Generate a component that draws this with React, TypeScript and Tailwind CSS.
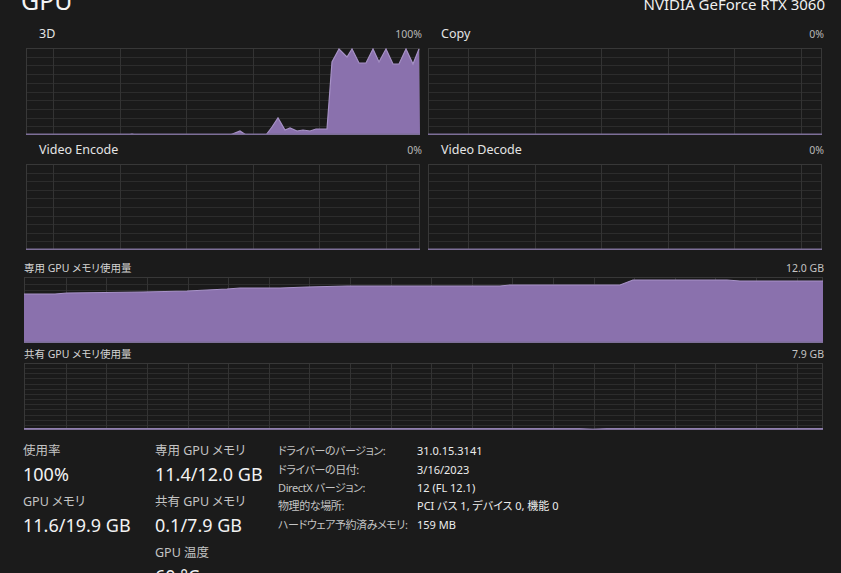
import React from "react";

type Pt = [number, number];

interface GraphProps {
  w: number;
  h: number;
  rows: number;
  colStep: number;
  colStart: number;
  points?: Pt[];
}

function Graph({ w, h, rows, colStep, colStart, points }: GraphProps) {
  const hLines = Array.from({ length: rows - 1 }, (_, i) => Math.round(((i + 1) * h) / rows) + 0.5);
  const vLines: number[] = [];
  for (let x = colStart; x < w - 1; x += colStep) vLines.push(Math.round(x) + 0.5);
  const line = points ? points.map((p) => p.join(",")).join(" ") : "";

  return (
    <svg width={w} height={h} viewBox={`0 0 ${w} ${h}`} className="block">
      <rect width={w} height={h} fill="#1a1a1a" />
      {hLines.map((y) => (
        <line key={"h" + y} x1={0} x2={w} y1={y} y2={y} stroke="#2c2c2c" strokeWidth={1} />
      ))}
      {vLines.map((x) => (
        <line key={"v" + x} x1={x} x2={x} y1={0} y2={h} stroke="#333333" strokeWidth={1} />
      ))}
      <rect x={0.5} y={0.5} width={w - 1} height={h - 1} fill="none" stroke="#383838" />
      {points && <polygon points={`0,${h} ${line} ${w},${h}`} fill="#8a71ad" />}
      {points && <polyline points={line} fill="none" stroke="#a792c7" strokeWidth={1.2} />}
      <line x1={0} x2={w} y1={h - 0.75} y2={h - 0.75} stroke="#7d6f98" strokeWidth={1.5} />
    </svg>
  );
}

const threeD: Pt[] = [
  [0, 87], [102, 87], [106, 86], [110, 87], [204, 87], [214, 83], [220, 87], [240, 87],
  [246, 79], [252, 70], [259, 82], [264, 80], [271, 83], [277, 82], [284, 83], [290, 81],
  [296, 81], [301, 81], [306, 14], [313, 1], [321, 9], [326, 1], [333, 15], [340, 15],
  [347, 1], [353, 14], [360, 1], [367, 16], [373, 16], [380, 1], [387, 16], [393, 1],
];

const dedicated: Pt[] = [
  [0, 17], [31, 17], [43, 16], [119, 15], [163, 14], [203, 12], [216, 11], [256, 11],
  [283, 10], [323, 9], [396, 9], [476, 9], [486, 8], [596, 8], [609, 3], [703, 3],
  [716, 4], [799, 4],
];

const shared: Pt[] = [
  [0, 65.5], [555, 65.5], [569, 66.5], [583, 65.5], [799, 65.5],
];

function Panel({
  title,
  value,
  h,
  colStart,
  points,
}: {
  title: string;
  value: string;
  h: number;
  colStart: number;
  points?: Pt[];
}) {
  return (
    <div>
      <div className="flex justify-between items-center h-[18px] pl-[13px] -mr-[2px]">
        <span className="text-[12.5px] text-[#e4e4e4]">{title}</span>
        <span className="text-[10.5px] text-[#b8b8b8]">{value}</span>
      </div>
      <div className="mt-[4px]">
        <Graph w={394} h={h} rows={10} colStep={66.5} colStart={colStart} points={points} />
      </div>
    </div>
  );
}

const details: [string, string][] = [
  ["ドライバーのバージョン:", "31.0.15.3141"],
  ["ドライバーの日付:", "3/16/2023"],
  ["DirectX バージョン:", "12 (FL 12.1)"],
  ["物理的な場所:", "PCI バス 1, デバイス 0, 機能 0"],
  ["ハードウェア予約済みメモリ:", "159 MB"],
];

function Stat({ label, value }: { label: string; value: string }) {
  return (
    <div className="h-[44px]">
      <div className="text-[12.5px] leading-[16px] text-[#c4c4c4] whitespace-nowrap">{label}</div>
      <div className="mt-[2px] text-[18px] leading-[26px] text-[#f2f2f2] whitespace-nowrap">{value}</div>
    </div>
  );
}

export default function App() {
  return (
    <div className="w-[841px] h-[573px] overflow-hidden bg-[#1b1b1b] text-[#e6e6e6] font-['Noto_Sans','Noto_Sans_CJK_JP',sans-serif] [font-feature-settings:'palt']">
      {/* header, cut off at the top */}
      <div className="flex items-baseline justify-between pl-[21px] pr-[16px] -mt-[12px]">
        <div className="text-[25px] leading-[25px] text-[#f4f4f4]">GPU</div>
        <div className="text-[15px] text-[#f0f0f0]">NVIDIA GeForce RTX 3060</div>
      </div>

      {/* engine graphs */}
      <div className="grid grid-cols-[394px_394px] gap-x-[8px] gap-y-[7px] pl-[26px] mt-[10px]">
        <Panel title="3D" value="100%" h={87} colStart={27} points={threeD} />
        <Panel title="Copy" value="0%" h={87} colStart={40} />
        <Panel title="Video Encode" value="0%" h={86} colStart={27} />
        <Panel title="Video Decode" value="0%" h={86} colStart={40} />
      </div>

      {/* memory graphs */}
      <div className="pl-[24px] pr-[18px] mt-[11px]">
        <div className="flex justify-between items-center h-[16px] -mr-[1px]">
          <span className="text-[10.5px] text-[#d4d4d4]">専用 GPU メモリ使用量</span>
          <span className="text-[10.5px] text-[#c4c4c4]">12.0 GB</span>
        </div>
        <Graph w={799} h={66} rows={10} colStep={40.6} colStart={41.7} points={dedicated} />
        <div className="flex justify-between items-center h-[16px] mt-[4px] -mr-[1px]">
          <span className="text-[10.5px] text-[#d4d4d4]">共有 GPU メモリ使用量</span>
          <span className="text-[10.5px] text-[#c4c4c4]">7.9 GB</span>
        </div>
        <Graph w={799} h={67} rows={13} colStep={40.6} colStart={41.7} points={shared} />
      </div>

      {/* stats */}
      <div className="flex pl-[23px] mt-[13px]">
        <div className="w-[132px] flex flex-col gap-[7px]">
          <Stat label="使用率" value="100%" />
          <Stat label="GPU メモリ" value="11.6/19.9 GB" />
        </div>
        <div className="w-[123px] flex flex-col gap-[7px]">
          <Stat label="専用 GPU メモリ" value="11.4/12.0 GB" />
          <Stat label="共有 GPU メモリ" value="0.1/7.9 GB" />
          <Stat label="GPU 温度" value="60 °C" />
        </div>
        <div className="flex flex-col">
          {details.map(([k, v]) => (
            <div key={k} className="flex h-[18.3px] items-center text-[11px] whitespace-nowrap">
              <span className="w-[139px] text-[#c4c4c4] tracking-[-0.4px]">{k}</span>
              <span className="text-[#ececec]">{v}</span>
            </div>
          ))}
        </div>
      </div>
    </div>
  );
}
